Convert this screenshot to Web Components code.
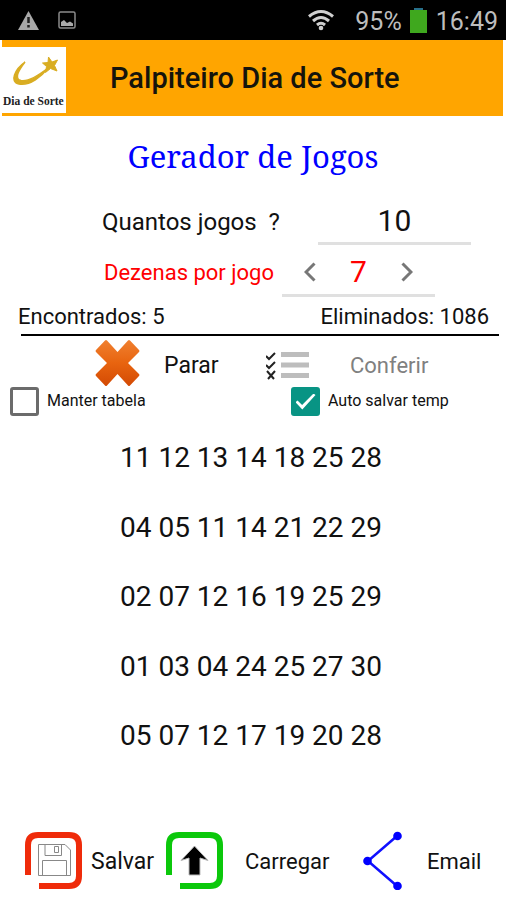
<!DOCTYPE html>
<html lang="pt-BR">
<head>
<meta charset="utf-8">
<meta name="viewport" content="width=device-width, initial-scale=1">
<title>Palpiteiro Dia de Sorte</title>
<style>
html, body { margin: 0; height: 100%; background: #fff; }
body { font-family: Roboto, "Liberation Sans", sans-serif; color: #111; }
sorte-app { min-height: 100vh; }
</style>
</head>
<body>
<sorte-app></sorte-app>
<script>
const define = (name, html, setup) => customElements.define(name, class extends HTMLElement {
  constructor() {
    super();
    const t = document.createElement('template');
    t.innerHTML = html;
    this.attachShadow({ mode: 'open' }).append(t.content.cloneNode(true));
  }
  connectedCallback() { if (setup) setup(this, this.shadowRoot); }
});

define('status-bar', `
<style>
:host { display: flex; align-items: center; height: 40px; padding: 0 8px 0 18px; background: #000; color: #bdbdbd; font-size: 25px; box-sizing: border-box; }
svg { display: block; flex: none; }
span { padding-top: 2px; }
.warn { margin-right: 19px; }
.wifi { margin-left: auto; margin-right: 20px; }
.bat { margin: 0 9px 0 8px; }
</style>
<svg class="warn" width="21" height="20" viewBox="0 0 21 20"><path d="M10.5 1 21 20H0Z" fill="#a9a9a9"/><path d="M10.5 7v6M10.5 15v2.500" stroke="#222" stroke-width="2.500"/></svg>
<svg width="18" height="18" viewBox="0 0 18 18"><rect x="1" y="1" width="16" height="16" rx="1.500" fill="none" stroke="#8a8a8a" stroke-width="1.500"/><path d="M3 15V11l3-2 3 3 3-1.500 3 2V15Z" fill="#aaa"/></svg>
<svg class="wifi" width="28" height="22" viewBox="0 0 28 22" fill="none" stroke="#d0d0d0" stroke-width="3"><path d="M2 7.500Q14-2.500 26 7.500M6 12Q14 5 22 12M10 16Q14 12.500 18 16"/><circle cx="14" cy="19" r="2.300" fill="#d0d0d0" stroke="none"/></svg>
<span>95%</span>
<svg class="bat" width="17" height="25" viewBox="0 0 17 25"><path d="M4 0h9v3H4z" fill="#27708a"/><path d="M0 2h17v23H0z" fill="#3fa81e"/></svg>
<span>16:49</span>`);

define('app-header', `
<style>
:host { display: flex; align-items: center; height: 76px; margin: 0 3px 0 2px; background: #ffa500; color: #15140c; }
svg { display: block; flex: none; margin-top: 4px; }
h1 { margin: 0 0 0 44px; font-size: 29px; line-height: 36px; font-weight: 500; }
</style>
<svg width="64" height="66" viewBox="0 0 64 66" role="img" aria-label="Dia de Sorte">
<rect width="64" height="66" fill="#fff"/>
<path d="M23 15C13 22 7 35 17 37C28 39 40 29 46 21C37 28 27 35 19 33.500C12 32 16 24 23 15Z" fill="#d9ad22" stroke="#d9ad22" stroke-width="1.500"/>
<path d="M46.500 10 50 15 55.500 13 52.500 18.500 55 24 48.500 21.500 43.500 25.500 44.500 19.500 40.500 16 46 15.500Z" fill="#d9ad22" stroke="#d9ad22"/>
<text x="1" y="58" font-family="Liberation Serif, serif" font-weight="700" font-size="11.500" fill="#222">Dia de Sorte</text>
</svg>
<h1><slot></slot></h1>`);

define('count-field', `
<style>
:host { display: flex; align-items: center; }
label { flex: none; font-size: 24px; line-height: 32px; white-space: pre; }
input { width: 153px; height: 46px; padding: 0; border: 0; border-bottom: 3px solid #e0e0e0; box-sizing: border-box; background: none; text-align: center; font: 30px Roboto, sans-serif; color: inherit; outline: 0; }
</style>
<label for="n">Quantos jogos  ?</label><input id="n" inputmode="numeric" value="10">`);

define('number-stepper', `
<style>
:host { display: flex; align-items: center; color: #f00; }
label { flex: none; font-size: 22px; line-height: 32px; }
.box { display: flex; align-items: center; width: 153px; height: 48px; border-bottom: 3px solid #e0e0e0; box-sizing: border-box; }
button { flex: none; width: 56px; height: 44px; padding: 0; border: 0; background: none; display: grid; place-items: center; }
input { flex: 1; min-width: 0; padding: 0; border: 0; background: none; text-align: center; font: 30px Roboto, sans-serif; color: inherit; outline: 0; }
</style>
<label for="d">Dezenas por jogo</label>
<div class="box">
<button type="button" aria-label="Menos"><svg width="12" height="20" viewBox="0 0 12 20"><path d="M10.500 1.500 2 10l8.500 8.500" fill="none" stroke="#777" stroke-width="3"/></svg></button>
<input id="d" inputmode="numeric" value="7">
<button type="button" aria-label="Mais"><svg width="12" height="20" viewBox="0 0 12 20"><path d="M1.500 1.500 10 10l-8.500 8.500" fill="none" stroke="#777" stroke-width="3"/></svg></button>
</div>`);

define('icon-button', `
<style>
:host { display: block; }
button { display: flex; align-items: center; gap: var(--gap, 24px); padding: 0; border: 0; background: none; font: var(--size, 22px)/32px Roboto, sans-serif; color: inherit; }
span { padding-top: var(--drop, 2px); }
::slotted(svg) { display: block; flex: none; }
</style>
<button type="button"><slot name="icon"></slot><span><slot></slot></span></button>`,
(el, root) => { root.querySelector('button').disabled = el.hasAttribute('disabled'); });

define('check-option', `
<style>
:host { display: flex; align-items: center; gap: 8px; }
input { appearance: none; margin: 0; width: 29px; height: 29px; flex: none; border: 3px solid #6b6b6b; border-radius: 3px; background: #fff; display: grid; place-items: center; }
input:checked { border-color: #089484; background: #089484; }
input:checked::before { content: ""; width: 20px; height: 16px; background: #fff; clip-path: polygon(0 55%, 10% 43%, 33% 72%, 90% 0, 100% 10%, 34% 100%); }
label { font-size: 16px; line-height: 24px; padding-bottom: 2px; }
</style>
<input type="checkbox" id="c"><label for="c"><slot></slot></label>`,
(el, root) => { root.querySelector('input').checked = el.hasAttribute('checked'); });

define('game-list', `
<style>
:host { display: block; }
ul { list-style: none; margin: 0; padding: 0 4px 0 0; display: grid; }
li { height: 35px; padding-bottom: 35px; font-size: 28px; line-height: 35px; text-align: center; }
li:nth-child(even) { padding-bottom: 34px; }
</style>
<ul></ul>`,
(el, root) => {
  const ul = root.querySelector('ul');
  for (const g of el.getAttribute('games').split(',')) {
    const li = document.createElement('li');
    li.textContent = g;
    ul.append(li);
  }
});

define('sorte-app', `
<style>
:host { display: flex; flex-direction: column; min-height: 100%; }
h2 { margin: 20px 0 0; text-align: center; color: #00f; font: 400 31px/40px "Noto Serif", "DejaVu Serif Condensed", "DejaVu Serif", serif; }
count-field { margin: 23px 36px 0 102px; gap: 38px; }
number-stepper { margin: 4px 71px 0 104px; gap: 8px; }
count-field, number-stepper { white-space: nowrap; }
.stats { display: flex; justify-content: space-between; padding: 4px 17px 1px 18px; font-size: 22px; line-height: 32px; }
hr { margin: 0 7px 0 21px; border: 0; height: 2px; background: #000; }
.actions { display: grid; grid-template-columns: 171fr 240fr; padding: 3px 0 0 95px; height: 48px; align-items: center; }
.strong { --size: 23px; }
.actions .strong { --drop: 6px; }
.off { --gap: 41px; color: #808080; margin-top: 4px; }
.checks { display: grid; grid-template-columns: 281fr 215fr; padding-left: 10px; }
game-list { margin-top: 24px; }
footer { display: grid; grid-template-columns: 141fr 197fr 143fr; align-items: center; margin-top: auto; padding: 0 0 10px 25px; }
</style>
<status-bar></status-bar>
<app-header>Palpiteiro Dia de Sorte</app-header>
<h2>Gerador de Jogos</h2>
<count-field></count-field>
<number-stepper></number-stepper>
<div class="stats"><span>Encontrados: 5</span><span>Eliminados: 1086</span></div>
<hr>
<div class="actions">
<icon-button class="strong"><svg slot="icon" width="45" height="48" viewBox="0 0 45 48"><defs><linearGradient id="g" x1="0" y1="0" x2="0" y2="1"><stop offset="0" stop-color="#f08030"/><stop offset=".5" stop-color="#e8640f"/><stop offset="1" stop-color="#d34a04"/></linearGradient></defs><path d="M10 1.500Q11 .5 12 1.500L22.500 13 33 1.500Q34 .5 35 1.500L44 11Q45 12 44 13L33 24 44 35Q45 36 44 37L35 46.500Q34 47.500 33 46.500L22.500 35 12 46.500Q11 47.500 10 46.500L1 37Q0 36 1 35L12 24 1 13Q0 12 1 11Z" fill="url(#g)"/></svg>Parar</icon-button>
<icon-button class="off" disabled><svg slot="icon" width="43" height="29" viewBox="0 0 43 29"><path d="M15 3.500h28M15 14h28M15 24.500h28" stroke="#bdbdbd" stroke-width="5"/><path d="M0 5l3 3L9 2M0 14l3 3 6-6M1 20l7 8M9 20 2 28" fill="none" stroke="#222" stroke-width="2"/></svg>Conferir</icon-button>
</div>
<div class="checks"><check-option>Manter tabela</check-option><check-option checked>Auto salvar temp</check-option></div>
<game-list games="11 12 13 14 18 25 28,04 05 11 14 21 22 29,02 07 12 16 19 25 29,01 03 04 24 25 27 30,05 07 12 17 19 20 28"></game-list>
<footer>
<icon-button class="strong" style="--gap:9px"><svg slot="icon" width="57" height="57" viewBox="0 0 57 57"><path d="M3 43V13Q3 3 13 3H44Q54 3 54 13V44Q54 54 44 54H14" fill="none" stroke="#ef2b0a" stroke-width="6"/><path d="M13.500 12.500H40L45.500 18V43.500H13.500ZM20 12.500V23.500H36.500V12.500M29.500 14.500h4v6h-4zM17.500 43.500V28.500H41.500V43.500" fill="#fff" stroke="#888" stroke-width="1"/></svg>Salvar</icon-button>
<icon-button style="--gap:22px"><svg slot="icon" width="57" height="57" viewBox="0 0 57 57"><path d="M3 43V13Q3 3 13 3H44Q54 3 54 13V44Q54 54 44 54H14" fill="none" stroke="#0bc80b" stroke-width="6"/><path d="M28.500 14 42 28.500 34 26V43H23V26L15 28.500Z" fill="#000" stroke="#bbb" stroke-width="1"/></svg>Carregar</icon-button>
<icon-button style="--gap:25px"><svg slot="icon" width="39" height="59" viewBox="0 0 39 59"><path d="M34 5 5 30 34 55" fill="none" stroke="#1010ff" stroke-width="2.500"/><g fill="#00f"><circle cx="34.500" cy="5" r="4.300"/><circle cx="4.500" cy="30" r="4.300"/><circle cx="34.500" cy="55" r="4.300"/></g></svg>Email</icon-button>
</footer>`);
</script>
</body>
</html>
